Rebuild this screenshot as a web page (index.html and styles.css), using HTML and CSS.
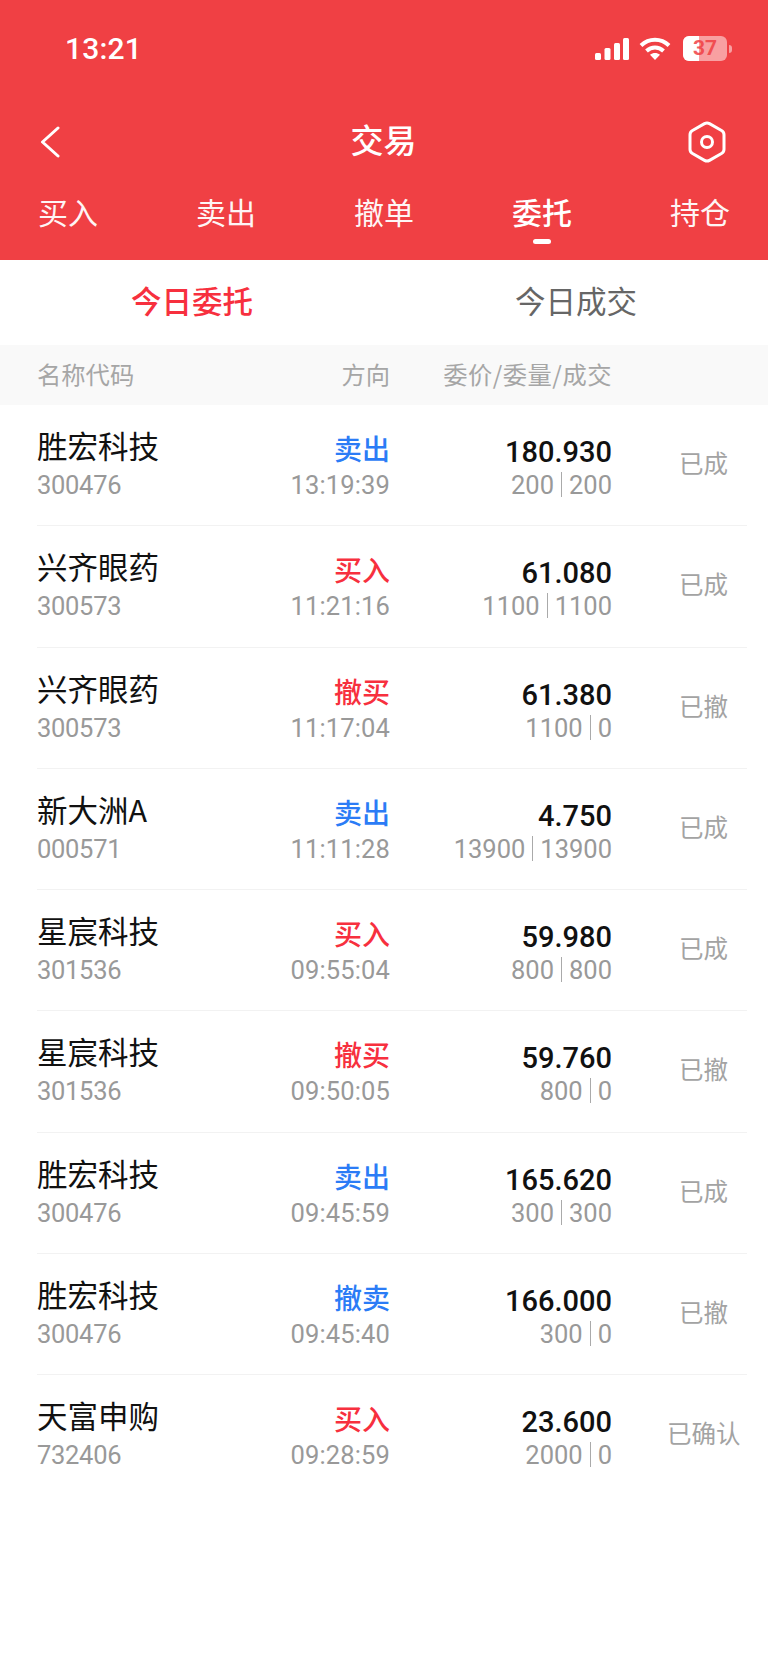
FILE: index.html
```html
<!DOCTYPE html>
<html lang="zh-CN">
<head>
  <meta charset="UTF-8">
  <meta name="viewport" content="width=device-width, initial-scale=1.0">
  <title>交易</title>
  <link rel="stylesheet" href="styles.css">
</head>
<body>
  <header class="top">
    <div class="status-bar">
      <span class="clock">13:21</span>
      <div class="status-icons">
        <svg class="signal" width="34" height="22" viewBox="0 0 34 22" fill="#fff">
          <rect x="0" y="15" width="6" height="7" rx="1.5"/>
          <rect x="9.500" y="10" width="6" height="12" rx="1.5"/>
          <rect x="19" y="5" width="6" height="17" rx="1.5"/>
          <rect x="28" y="0" width="6" height="22" rx="1.5"/>
        </svg>
        <svg class="wifi" width="32" height="23" viewBox="0 0 32 23" fill="none" stroke="#fff" stroke-width="4">
          <path d="M2 8.500C10 .8 22 .8 30 8.500"/>
          <path d="M7.500 14c5-4.600 12-4.600 17 0"/>
          <path d="M16 23l-5-5.200c3-2.400 7-2.400 10 0z" fill="#fff" stroke="none"/>
        </svg>
        <div class="battery">
          <div class="battery-fill"></div>
          <span class="battery-num">37</span>
        </div>
        <span class="battery-nub"></span>
      </div>
    </div>
    <div class="nav-bar">
      <svg class="back" width="20" height="32" viewBox="0 0 20 32" fill="none" stroke="#fff" stroke-width="3" stroke-linecap="round" stroke-linejoin="round">
        <path d="M18 2L2.500 16 18 30"/>
      </svg>
      <span class="nav-title">交易</span>
      <svg class="hex" width="40" height="42" viewBox="0 0 40 42" fill="none" stroke="#fff" stroke-width="3">
        <path d="M17.500 2.600q2.500-1.400 5 0L34.500 9.500q2.500 1.400 2.500 4.300V28.200q0 2.900-2.500 4.300L22.500 39.400q-2.500 1.400-5 0L5.500 32.500q-2.500-1.400-2.500-4.300V13.800q0-2.900 2.500-4.300z"/>
        <circle cx="20" cy="21" r="5.500"/>
      </svg>
    </div>
    <nav class="tabs">
      <span class="tab">买入</span>
      <span class="tab">卖出</span>
      <span class="tab">撤单</span>
      <span class="tab active">委托</span>
      <span class="tab">持仓</span>
    </nav>
  </header>

  <div class="subtabs">
    <span class="subtab active">今日委托</span>
    <span class="subtab">今日成交</span>
  </div>

  <div class="table-head">
    <span>名称代码</span>
    <span class="right">方向</span>
    <span class="right spaced">委价/委量/成交</span>
  </div>

  <div class="row">
    <div><div class="name">胜宏科技</div><div class="sub num code">300476</div></div>
    <div class="right"><div class="dir sell">卖出</div><div class="sub num time">13:19:39</div></div>
    <div class="right"><div class="price num">180.930</div><div class="sub num">200<i class="bar"></i>200</div></div>
    <div class="state">已成</div>
  </div>
  <div class="row">
    <div><div class="name">兴齐眼药</div><div class="sub num code">300573</div></div>
    <div class="right"><div class="dir buy">买入</div><div class="sub num time">11:21:16</div></div>
    <div class="right"><div class="price num">61.080</div><div class="sub num">1100<i class="bar"></i>1100</div></div>
    <div class="state">已成</div>
  </div>
  <div class="row">
    <div><div class="name">兴齐眼药</div><div class="sub num code">300573</div></div>
    <div class="right"><div class="dir buy">撤买</div><div class="sub num time">11:17:04</div></div>
    <div class="right"><div class="price num">61.380</div><div class="sub num">1100<i class="bar"></i>0</div></div>
    <div class="state">已撤</div>
  </div>
  <div class="row">
    <div><div class="name">新大洲A</div><div class="sub num code">000571</div></div>
    <div class="right"><div class="dir sell">卖出</div><div class="sub num time">11:11:28</div></div>
    <div class="right"><div class="price num">4.750</div><div class="sub num">13900<i class="bar"></i>13900</div></div>
    <div class="state">已成</div>
  </div>
  <div class="row">
    <div><div class="name">星宸科技</div><div class="sub num code">301536</div></div>
    <div class="right"><div class="dir buy">买入</div><div class="sub num time">09:55:04</div></div>
    <div class="right"><div class="price num">59.980</div><div class="sub num">800<i class="bar"></i>800</div></div>
    <div class="state">已成</div>
  </div>
  <div class="row">
    <div><div class="name">星宸科技</div><div class="sub num code">301536</div></div>
    <div class="right"><div class="dir buy">撤买</div><div class="sub num time">09:50:05</div></div>
    <div class="right"><div class="price num">59.760</div><div class="sub num">800<i class="bar"></i>0</div></div>
    <div class="state">已撤</div>
  </div>
  <div class="row">
    <div><div class="name">胜宏科技</div><div class="sub num code">300476</div></div>
    <div class="right"><div class="dir sell">卖出</div><div class="sub num time">09:45:59</div></div>
    <div class="right"><div class="price num">165.620</div><div class="sub num">300<i class="bar"></i>300</div></div>
    <div class="state">已成</div>
  </div>
  <div class="row">
    <div><div class="name">胜宏科技</div><div class="sub num code">300476</div></div>
    <div class="right"><div class="dir sell">撤卖</div><div class="sub num time">09:45:40</div></div>
    <div class="right"><div class="price num">166.000</div><div class="sub num">300<i class="bar"></i>0</div></div>
    <div class="state">已撤</div>
  </div>
  <div class="row last">
    <div><div class="name">天富申购</div><div class="sub num code">732406</div></div>
    <div class="right"><div class="dir buy">买入</div><div class="sub num time">09:28:59</div></div>
    <div class="right"><div class="price num">23.600</div><div class="sub num">2000<i class="bar"></i>0</div></div>
    <div class="state">已确认</div>
  </div>
</body>
</html>
```

FILE: styles.css
```css
/* General Styles */
body {
  margin: 0;
  background: #fff;
  color: #111;
  font-family: "Noto Sans CJK SC", "Noto Sans", sans-serif;
}

.top {
  height: 260px;
  background: #f04044;
  color: #fff;
}

/* Status bar */
.status-bar {
  height: 98px;
  display: flex;
  justify-content: space-between;
  align-items: center;
  padding: 0 36px 0 65px;
}

.clock {
  font-family: Roboto, sans-serif;
  font-size: 30px;
  font-weight: 500;
  letter-spacing: 0.2px;
  margin-top: -1px;
}

.status-icons {
  display: flex;
  align-items: center;
  margin-top: -1px;
}

.wifi {
  margin-left: 10px;
}

.battery {
  position: relative;
  width: 44px;
  height: 25px;
  margin-left: 12px;
  border-radius: 6px;
  background: rgba(255, 255, 255, 0.5);
  overflow: hidden;
}

.battery-fill {
  width: 16px;
  height: 25px;
  background: #fff;
}

.battery-num {
  position: absolute;
  top: 0;
  left: 0;
  width: 44px;
  text-align: center;
  font-family: Roboto, sans-serif;
  font-size: 21px;
  font-weight: 700;
  line-height: 25px;
  color: #f04044;
  opacity: 0.85;
}

.battery-nub {
  width: 3px;
  height: 8px;
  margin-left: 2px;
  border-radius: 0 3px 3px 0;
  background: rgba(255, 255, 255, 0.5);
}

/* Title row */
.nav-bar {
  height: 82px;
  display: flex;
  justify-content: space-between;
  align-items: center;
  padding: 0 41px 0 40px;
}

.nav-title {
  font-size: 33px;
  font-weight: 500;
  line-height: 44px;
  margin-left: 20px;
}

.back,
.hex {
  margin-top: 5px;
}

/* Red tabs */
.tabs {
  display: flex;
  justify-content: space-between;
  padding: 0 38px;
}

.tab {
  position: relative;
  font-size: 30px;
  line-height: 42px;
  margin-top: 10px;
  opacity: 0.95;
}

.tab.active {
  font-weight: 500;
  opacity: 1;
}

.tab.active::after {
  content: "";
  position: absolute;
  left: 21px;
  top: 49px;
  width: 18px;
  height: 5px;
  border-radius: 3px;
  background: #fff;
}

/* White tabs */
.subtabs {
  height: 85px;
  display: flex;
  align-items: center;
}

.subtab {
  flex: 1;
  text-align: center;
  font-size: 30.5px;
  color: #666;
  margin-top: -6px;
}

.subtab.active {
  color: #f7303e;
  font-weight: 500;
}

/* Table */
.table-head {
  height: 60px;
  display: grid;
  grid-template-columns: 200px 153px 222px;
  align-items: center;
  padding-left: 37px;
  padding-bottom: 4px;
  box-sizing: border-box;
  background: #f9f9f9;
  color: #a6a6a6;
  font-size: 24.3px;
}

.right {
  text-align: right;
}

.spaced {
  letter-spacing: 0.5px;
}

.row {
  height: 120.3px;
  margin-left: 37px;
  width: 710px;
  display: grid;
  grid-template-columns: 200px 153px 222px 135px;
  align-items: start;
  border-bottom: 1px solid #f2f2f2;
}

.row.last {
  border-bottom: 0;
}

.name {
  margin: 19px 0 2px;
  font-size: 30.5px;
  line-height: 42px;
  white-space: nowrap;
}

.dir {
  margin: 22px 0 -1px;
  font-size: 28px;
  line-height: 42px;
  font-weight: 500;
}

.sell {
  color: #2b7cf6;
}

.buy {
  color: #f7303e;
}

.num {
  font-family: Roboto, sans-serif;
}

.price {
  margin: 26px 0 -5px;
  font-size: 29px;
  font-weight: 500;
  line-height: 42px;
}

.sub {
  font-size: 25.5px;
  line-height: 34px;
  color: #999;
  white-space: nowrap;
}

.code {
  letter-spacing: -0.3px;
}

.time {
  letter-spacing: 0.15px;
}

.bar {
  display: inline-block;
  width: 1px;
  height: 25px;
  margin: 0 7px;
  background: #aaa;
  vertical-align: -3px;
}

.state {
  margin-top: 41px;
  padding: 0 7px 0 55px;
  text-align: center;
  font-size: 24.5px;
  line-height: 34px;
  color: #a3a3a3;
  white-space: nowrap;
}
```
